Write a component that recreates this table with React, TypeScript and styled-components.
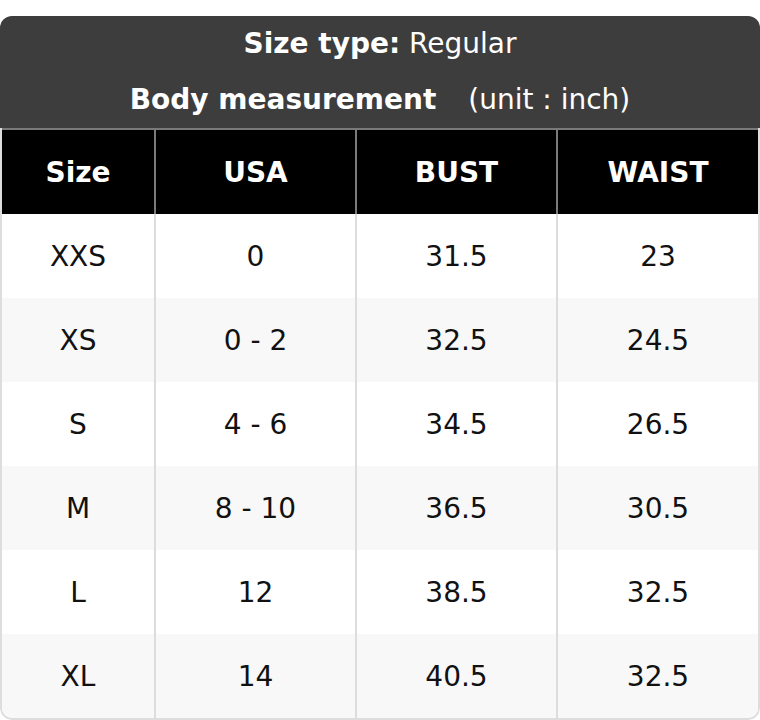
import React from "react";
import styled, { createGlobalStyle } from "styled-components";

const GlobalStyle = createGlobalStyle`
  html, body {
    margin: 0;
    padding: 0;
    background: #ffffff;
  }
  body {
    font-family: "DejaVu Sans", "Liberation Sans", sans-serif;
  }
`;

const Page = styled.div`
  padding-top: 16px;
  width: 760px;
`;

const Card = styled.div`
  border-radius: 12px;
  overflow: hidden;
  background: #ffffff;
`;

const Title = styled.div`
  background: #3d3d3d;
  color: #ffffff;
  text-align: center;
  font-size: 28px;
`;

const TitleLine = styled.div`
  height: 56px;
  line-height: 56px;
  white-space: nowrap;
`;

const Bold = styled.span`
  font-weight: bold;
`;

const Unit = styled.span`
  margin-left: 32px;
`;

const TableArea = styled.div`
  border: 2px solid #dddddd;
  border-top: none;
  border-radius: 0 0 12px 12px;
  overflow: hidden;
`;

const Grid = styled.div`
  display: grid;
  grid-template-columns: 154px 201px 201px 1fr;
`;

const HeadCell = styled.div<{ $last?: boolean }>`
  background: #000000;
  color: #ffffff;
  font-weight: bold;
  font-size: 28px;
  height: 84px;
  display: flex;
  align-items: center;
  justify-content: center;
  border-top: 2px solid #7a7a7a;
  border-right: ${(p) => (p.$last ? "none" : "2px solid #7a7a7a")};
`;

const Cell = styled.div<{ $alt: boolean; $last?: boolean }>`
  background: ${(p) => (p.$alt ? "#f8f8f8" : "#ffffff")};
  color: #111111;
  font-size: 28px;
  height: 84px;
  display: flex;
  align-items: center;
  justify-content: center;
  border-right: ${(p) => (p.$last ? "none" : "2px solid #dddddd")};
`;

const headers = ["Size", "USA", "BUST", "WAIST"];
const rows = [
  ["XXS", "0", "31.5", "23"],
  ["XS", "0 - 2", "32.5", "24.5"],
  ["S", "4 - 6", "34.5", "26.5"],
  ["M", "8 - 10", "36.5", "30.5"],
  ["L", "12", "38.5", "32.5"],
  ["XL", "14", "40.5", "32.5"],
];

export default function App() {
  return (
    <>
      <GlobalStyle />
      <Page>
        <Card>
          <Title>
            <TitleLine>
              <Bold>Size type:</Bold> Regular
            </TitleLine>
            <TitleLine>
              <Bold>Body measurement</Bold>
              <Unit>(unit : inch)</Unit>
            </TitleLine>
          </Title>
          <TableArea>
            <Grid>
              {headers.map((h, i) => (
                <HeadCell key={h} $last={i === headers.length - 1}>
                  {h}
                </HeadCell>
              ))}
              {rows.map((r, ri) =>
                r.map((v, ci) => (
                  <Cell key={`${ri}-${ci}`} $alt={ri % 2 === 1} $last={ci === r.length - 1}>
                    {v}
                  </Cell>
                ))
              )}
            </Grid>
          </TableArea>
        </Card>
      </Page>
    </>
  );
}
